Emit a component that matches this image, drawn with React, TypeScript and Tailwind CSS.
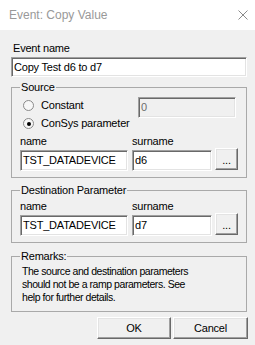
const sunken =
  "border border-t-[#a0a0a0] border-l-[#a0a0a0] border-r-white border-b-white shadow-[inset_1px_1px_0_#696969,inset_-1px_-1px_0_#e3e3e3]";
const raised =
  "border border-t-white border-l-white border-r-[#696969] border-b-[#696969] shadow-[inset_-1px_-1px_0_#a0a0a0,inset_1px_1px_0_#e3e3e3] bg-[#f0f0f0]";
const group = "border border-[#a9a9a9] px-[8px] m-0 min-w-0";

function TextBox({ value, width, disabled }: { value: string; width: string; disabled?: boolean }) {
  return (
    <div
      className={`${sunken} ${width} h-[21px] flex items-center pl-[2px] overflow-hidden whitespace-nowrap ${
        disabled ? "bg-[#f0f0f0] text-[#6d6d6d]" : "bg-white text-black"
      }`}
    >
      {value}
    </div>
  );
}

function Radio({ checked, label }: { checked?: boolean; label: string }) {
  return (
    <div className="flex items-center h-[13px] gap-[7px] ml-[3px]">
      <span className="w-[11px] h-[11px] rounded-full border border-[#8a8a8a] bg-[#f7f7f7] flex items-center justify-center">
        {checked && <span className="w-[4px] h-[4px] rounded-full bg-black" />}
      </span>
      <span>{label}</span>
    </div>
  );
}

function ParamRow({ surname }: { surname: string }) {
  return (
    <div className="flex items-end">
      <div className="flex flex-col w-[108px]">
        <span className="h-[13px] leading-[13px]">name</span>
        <div className="mt-[2px]">
          <TextBox value="TST_DATADEVICE" width="w-[108px]" />
        </div>
      </div>
      <div className="flex flex-col w-[80px] ml-[4px]">
        <span className="h-[13px] leading-[13px]">surname</span>
        <div className="mt-[2px]">
          <TextBox value={surname} width="w-[80px]" />
        </div>
      </div>
      <button className={`${raised} w-[28px] h-[22px] ml-[3px] mb-[1px] flex items-end justify-center pb-[3px] leading-none`}>
        ...
      </button>
    </div>
  );
}

export default function App() {
  return (
    <div className="w-[255px] h-[345px] bg-[#f0f0f0] text-[11px] leading-[13px] tracking-[-0.2px] text-black font-['Liberation_Sans',Arial,sans-serif] overflow-hidden">
      <div className="h-[30px] bg-white flex items-center justify-between pl-[9px] pr-[7px]">
        <span className="text-[12px] tracking-normal text-[#999999]">Event: Copy Value</span>
        <svg width="10" height="10" viewBox="0 0 10 10">
          <path d="M0.5 0.5 L9.5 9.5 M9.5 0.5 L0.5 9.5" stroke="#8a8a8a" strokeWidth="1" />
        </svg>
      </div>

      <div className="pl-[11px] pr-[8px] flex flex-col">
        <span className="mt-[12px] ml-[2px]">Event name</span>
        <div className="mt-[2px]">
          <div className={`${sunken} w-[236px] h-[20px] bg-white flex items-center pl-[2px]`}>Copy Test d6 to d7</div>
        </div>

        <fieldset className={`${group} mt-[4px] pb-[6px]`}>
          <legend className="px-[1px] h-[13px]">Source</legend>
          <div className="flex items-start pt-[3px]">
            <div className="flex flex-col gap-[5px] pt-[2px] w-[118px]">
              <Radio label="Constant" />
              <Radio checked label="ConSys parameter" />
            </div>
            <TextBox value="0" width="w-[98px]" disabled />
          </div>
          <div className="mt-[5px]">
            <ParamRow surname="d6" />
          </div>
        </fieldset>

        <fieldset className={`${group} mt-[6px] pb-[6px]`}>
          <legend className="px-[1px] h-[13px]">Destination Parameter</legend>
          <div className="mt-[3px]">
            <ParamRow surname="d7" />
          </div>
        </fieldset>

        <fieldset className={`${group} mt-[7px] pb-[7px]`}>
          <legend className="px-[1px] h-[13px]">Remarks:</legend>
          <p className="mt-[2px] ml-[2px] leading-[13px] text-[10.5px] tracking-[-0.45px]">
            The source and destination parameters
            <br />
            should not be a ramp parameters. See
            <br />
            help for further details.
          </p>
        </fieldset>

        <div className="flex justify-end gap-[2px] mt-[5px] -mr-[1px]">
          <button className={`${raised} w-[74px] h-[22px]`}>OK</button>
          <button className={`${raised} w-[75px] h-[22px]`}>Cancel</button>
        </div>
      </div>
    </div>
  );
}
